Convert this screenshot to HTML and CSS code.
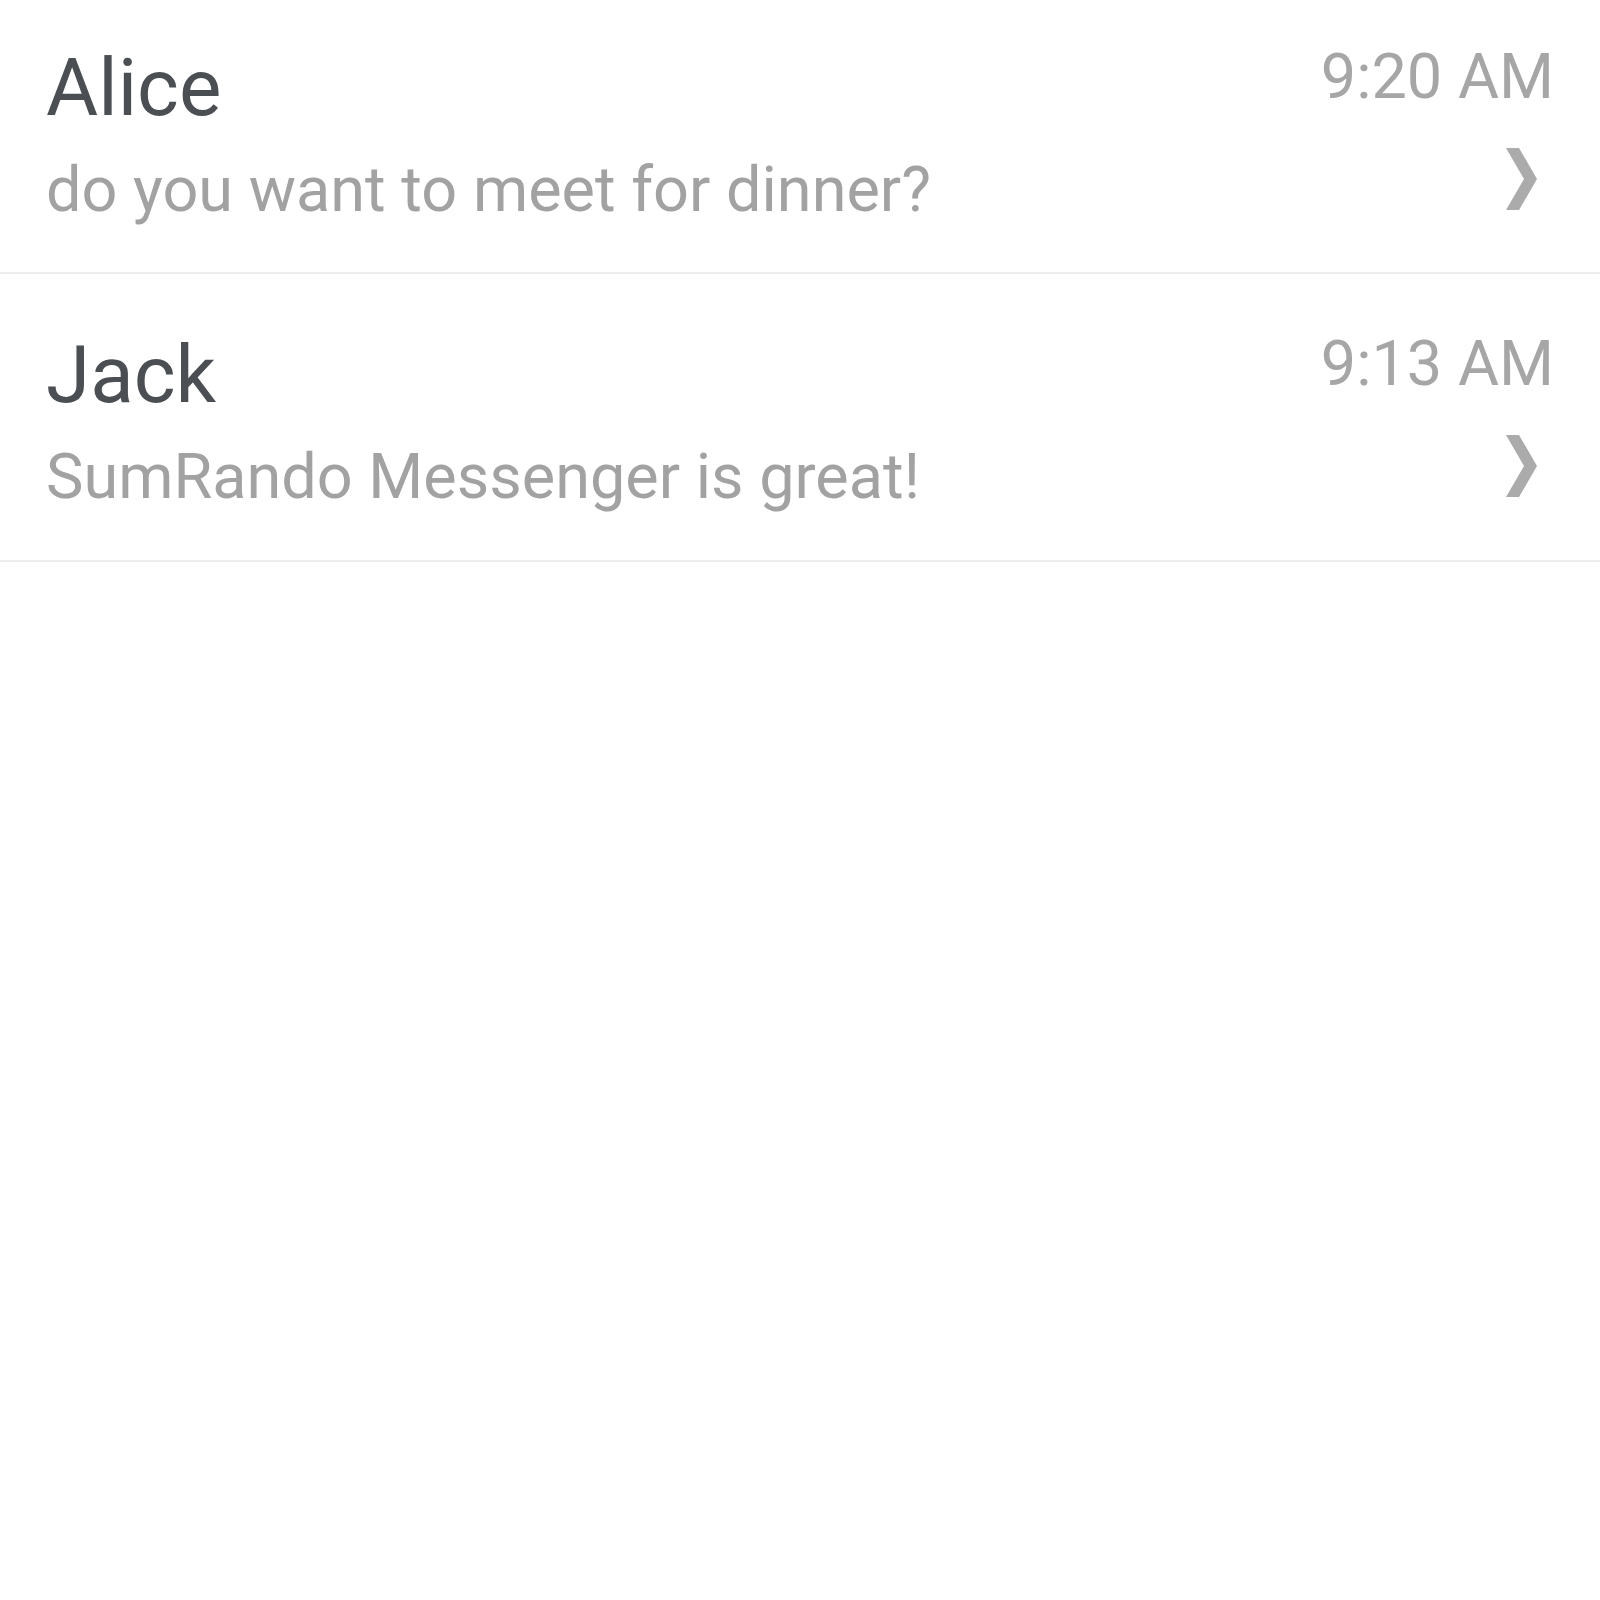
FILE: index.html
```html
<!DOCTYPE html>
<html lang="en">
<head>
    <meta charset="UTF-8">
    <meta name="viewport" content="width=device-width, initial-scale=1.0">
    <title>Messages</title>
    <link rel="stylesheet" href="styles.css">
</head>
<body>
    <ul class="threads">
        <li class="thread">
            <div class="thread-main">
                <div class="thread-name">Alice</div>
                <div class="thread-preview">do you want to meet for dinner?</div>
            </div>
            <div class="thread-meta">
                <div class="thread-time">9:20 AM</div>
                <svg class="chevron" width="31" height="62" viewBox="0 0 31 62">
                    <polygon points="0,0 13,0 31,31 13,62 0,62 18,31"/>
                </svg>
            </div>
        </li>
        <li class="thread">
            <div class="thread-main">
                <div class="thread-name">Jack</div>
                <div class="thread-preview">SumRando Messenger is great!</div>
            </div>
            <div class="thread-meta">
                <div class="thread-time">9:13 AM</div>
                <svg class="chevron" width="31" height="62" viewBox="0 0 31 62">
                    <polygon points="0,0 13,0 31,31 13,62 0,62 18,31"/>
                </svg>
            </div>
        </li>
    </ul>
</body>
</html>
```

FILE: styles.css
```css
body {
    margin: 0;
    background: #ffffff;
    font-family: Roboto, "Noto Sans", sans-serif;
}
.threads {
    list-style: none;
    margin: 0;
    padding: 0;
}
.thread {
    display: flex;
    justify-content: space-between;
    align-items: flex-start;
    box-sizing: border-box;
    height: 288px;
    padding: 55px 46px 0 46px;
    border-bottom: 2px solid #ededed;
}
.thread:first-child {
    height: 274px;
    padding-top: 42px;
}
.thread-name {
    margin-top: 6px;
    font-size: 80px;
    line-height: 80px;
    color: #4b4e53;
}
.thread-preview {
    margin-top: 27px;
    font-size: 63px;
    line-height: 70px;
    color: #a2a2a2;
}
.thread-meta {
    display: flex;
    flex-direction: column;
    align-items: flex-end;
}
.thread-time {
    font-size: 63px;
    line-height: 70px;
    color: #a6a6a6;
}
.chevron {
    display: block;
    margin-top: 36px;
    margin-right: 17px;
    fill: #ababab;
}
```
